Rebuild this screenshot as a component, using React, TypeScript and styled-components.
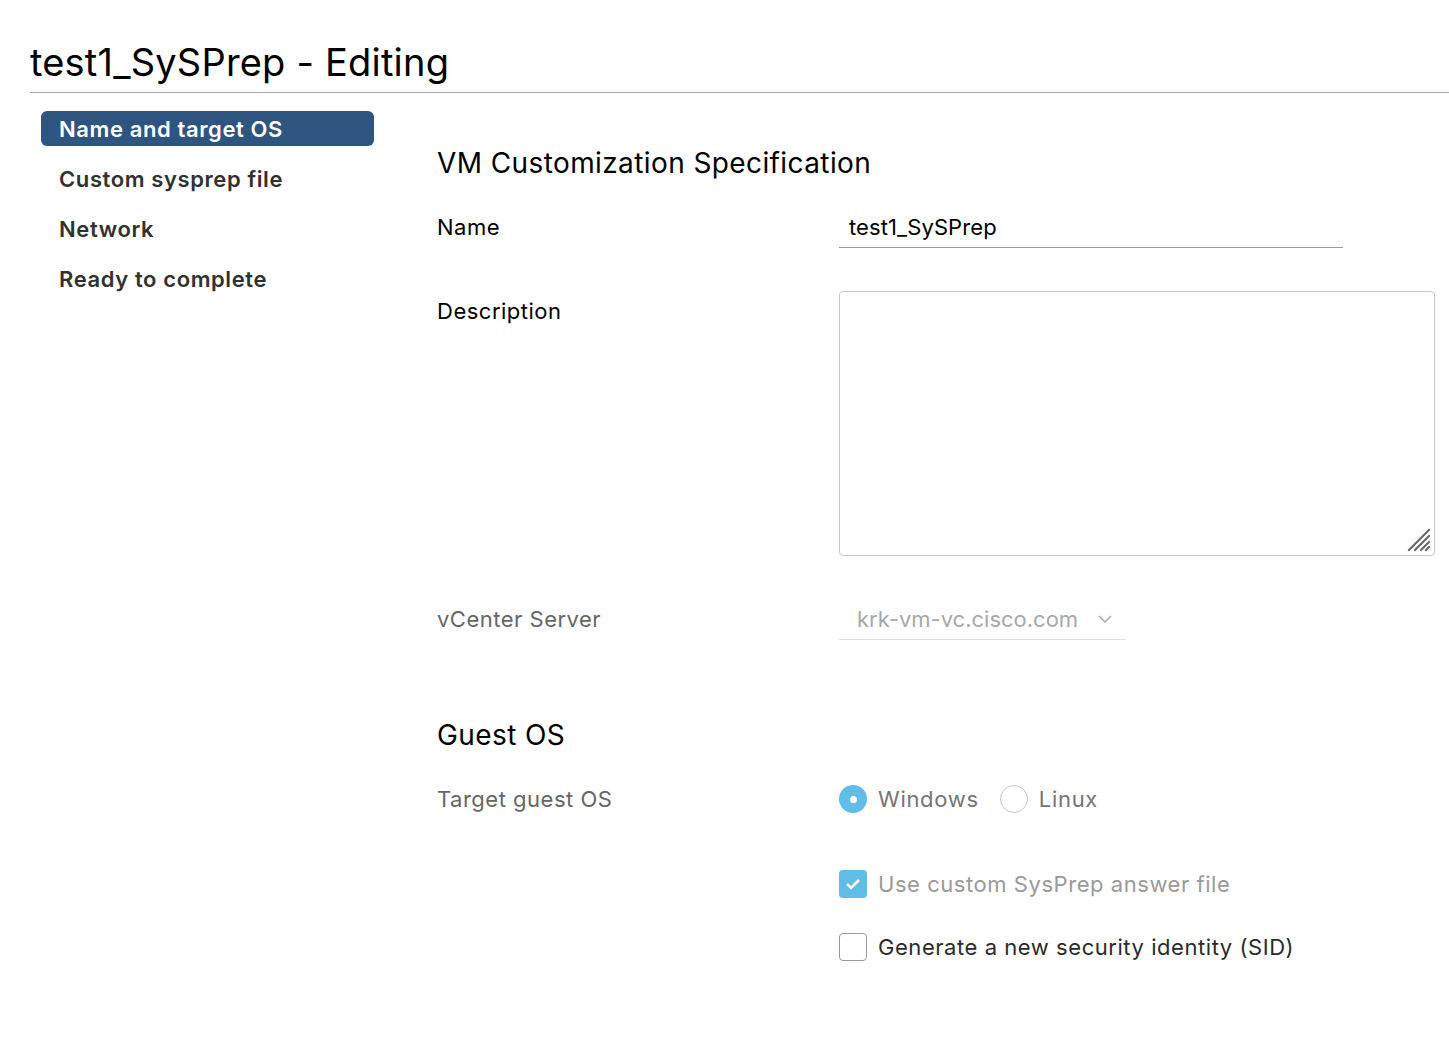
import React from "react";
import styled, { createGlobalStyle } from "styled-components";

const FONT = `"Inter", "Noto Sans", "Liberation Sans", sans-serif`;

const Global = createGlobalStyle`
  html, body { margin: 0; padding: 0; background: #fff; }
  body { font-family: ${FONT}; color: #000; }
  * { box-sizing: border-box; }
`;

const Page = styled.div`
  padding-left: 30px;
  width: 1449px;
`;

const Header = styled.h1`
  margin: 0;
  padding-top: 36px;
  height: 93px;
  font-size: 38px;
  line-height: 52px;
  font-weight: 400;
  color: #000;
  border-bottom: 1px solid #a8a8a8;
  letter-spacing: 0.2px;
`;

const Body = styled.div`
  display: flex;
`;

const Sidebar = styled.nav`
  width: 407px;
  padding: 18px 0 0 11px;
  display: flex;
  flex-direction: column;
  gap: 15px;
`;

const NavItem = styled.div<{ $active?: boolean }>`
  width: 333px;
  height: 35px;
  padding-left: 18px;
  border-radius: 6px;
  display: flex;
  align-items: center;
  font-size: 22px;
  font-weight: 600;
  letter-spacing: 0.6px;
  color: ${(p) => (p.$active ? "#fff" : "#313131")};
  background: ${(p) => (p.$active ? "#2d5580" : "transparent")};
`;

const Content = styled.div`
  flex: 1;
  display: flex;
  flex-direction: column;
`;

const SectionTitle = styled.h2<{ $mt: number }>`
  margin: ${(p) => p.$mt}px 0 0;
  font-size: 28px;
  line-height: 36px;
  font-weight: 400;
  letter-spacing: 0.4px;
  color: #000;
`;

const Row = styled.div<{ $mt: number }>`
  display: grid;
  grid-template-columns: 402px 1fr;
  margin-top: ${(p) => p.$mt}px;
  align-items: start;
`;

const Label = styled.div<{ $muted?: boolean; $offset?: number }>`
  font-size: 22px;
  line-height: 28px;
  letter-spacing: 0.5px;
  padding-top: ${(p) => p.$offset ?? 6}px;
  color: ${(p) => (p.$muted ? "#666" : "#000")};
`;

const TextInput = styled.div`
  width: 504px;
  height: 41px;
  padding: 6px 0 0 10px;
  font-size: 22px;
  line-height: 28px;
  letter-spacing: 0.1px;
  color: #000;
  border-bottom: 1px solid #9a9a9a;
`;

const TextAreaBox = styled.div`
  position: relative;
  width: 596px;
  height: 265px;
  border: 1px solid #c9c9c9;
  border-radius: 4px;
`;

const Grip = styled.svg`
  position: absolute;
  right: 2px;
  bottom: 2px;
`;

const Select = styled.div`
  width: 287px;
  height: 41px;
  padding: 6px 0 0 18px;
  display: flex;
  align-items: flex-start;
  gap: 20px;
  font-size: 22px;
  line-height: 28px;
  color: #a8a8a8;
  border-bottom: 1px solid #dedede;
`;

const Chevron = styled.svg`
  margin-top: 9px;
`;

const Options = styled.div`
  display: flex;
  align-items: center;
  height: 28px;
`;

const Option = styled.label<{ $gap?: number }>`
  display: flex;
  align-items: center;
  gap: 11px;
  margin-right: ${(p) => p.$gap ?? 0}px;
  font-size: 22px;
  line-height: 28px;
  letter-spacing: 0.7px;
  color: #757575;
`;

const Radio = styled.span<{ $checked?: boolean }>`
  width: 28px;
  height: 28px;
  border-radius: 50%;
  display: flex;
  align-items: center;
  justify-content: center;
  background: ${(p) => (p.$checked ? "#62bde6" : "#fff")};
  border: ${(p) => (p.$checked ? "none" : "1px solid #c4c4c4")};
  &::after {
    content: "";
    display: ${(p) => (p.$checked ? "block" : "none")};
    width: 7px;
    height: 7px;
    border-radius: 50%;
    background: #fff;
  }
`;

const CheckRow = styled.div<{ $mt: number; $dark?: boolean }>`
  margin-left: 402px;
  margin-top: ${(p) => p.$mt}px;
  display: flex;
  align-items: center;
  gap: 11px;
  height: 28px;
  font-size: 22px;
  line-height: 28px;
  letter-spacing: 0.55px;
  color: ${(p) => (p.$dark ? "#2b2b2b" : "#9a9a9a")};
`;

const Box = styled.span<{ $checked?: boolean }>`
  width: 28px;
  height: 28px;
  border-radius: 4px;
  display: flex;
  align-items: center;
  justify-content: center;
  background: ${(p) => (p.$checked ? "#62bde6" : "#fff")};
  border: ${(p) => (p.$checked ? "none" : "1px solid #9a9a9a")};
`;

export default function App() {
  return (
    <Page>
      <Global />
      <Header>test1_SySPrep - Editing</Header>
      <Body>
        <Sidebar>
          <NavItem $active>Name and target OS</NavItem>
          <NavItem>Custom sysprep file</NavItem>
          <NavItem>Network</NavItem>
          <NavItem>Ready to complete</NavItem>
        </Sidebar>
        <Content>
          <SectionTitle $mt={52}>VM Customization Specification</SectionTitle>
          <Row $mt={26}>
            <Label>Name</Label>
            <TextInput>test1_SySPrep</TextInput>
          </Row>
          <Row $mt={43}>
            <Label>Description</Label>
            <TextAreaBox>
              <Grip width="28" height="28" viewBox="0 0 28 28">
                <g stroke="#666" strokeWidth="2" strokeLinecap="square">
                  <line x1="5" y1="25" x2="25" y2="5" />
                  <line x1="11" y1="25" x2="25" y2="11" />
                  <line x1="17" y1="25" x2="25" y2="17" />
                  <line x1="22" y1="25" x2="25" y2="22" />
                </g>
              </Grip>
            </TextAreaBox>
          </Row>
          <Row $mt={43}>
            <Label $muted>vCenter Server</Label>
            <Select>
              <span>krk-vm-vc.cisco.com</span>
              <Chevron width="14" height="10" viewBox="0 0 14 10">
                <polyline points="1,2 7,8 13,2" fill="none" stroke="#a8a8a8" strokeWidth="1.5" />
              </Chevron>
            </Select>
          </Row>
          <SectionTitle $mt={77}>Guest OS</SectionTitle>
          <Row $mt={32}>
            <Label $muted $offset={0}>Target guest OS</Label>
            <Options>
              <Option $gap={21}>
                <Radio $checked />
                Windows
              </Option>
              <Option>
                <Radio />
                Linux
              </Option>
            </Options>
          </Row>
          <CheckRow $mt={57}>
            <Box $checked>
              <svg width="16" height="12" viewBox="0 0 16 12">
                <polyline points="2,6 6,10 14,2" fill="none" stroke="#fff" strokeWidth="2.6" />
              </svg>
            </Box>
            Use custom SysPrep answer file
          </CheckRow>
          <CheckRow $mt={35} $dark>
            <Box />
            Generate a new security identity (SID)
          </CheckRow>
        </Content>
      </Body>
    </Page>
  );
}
